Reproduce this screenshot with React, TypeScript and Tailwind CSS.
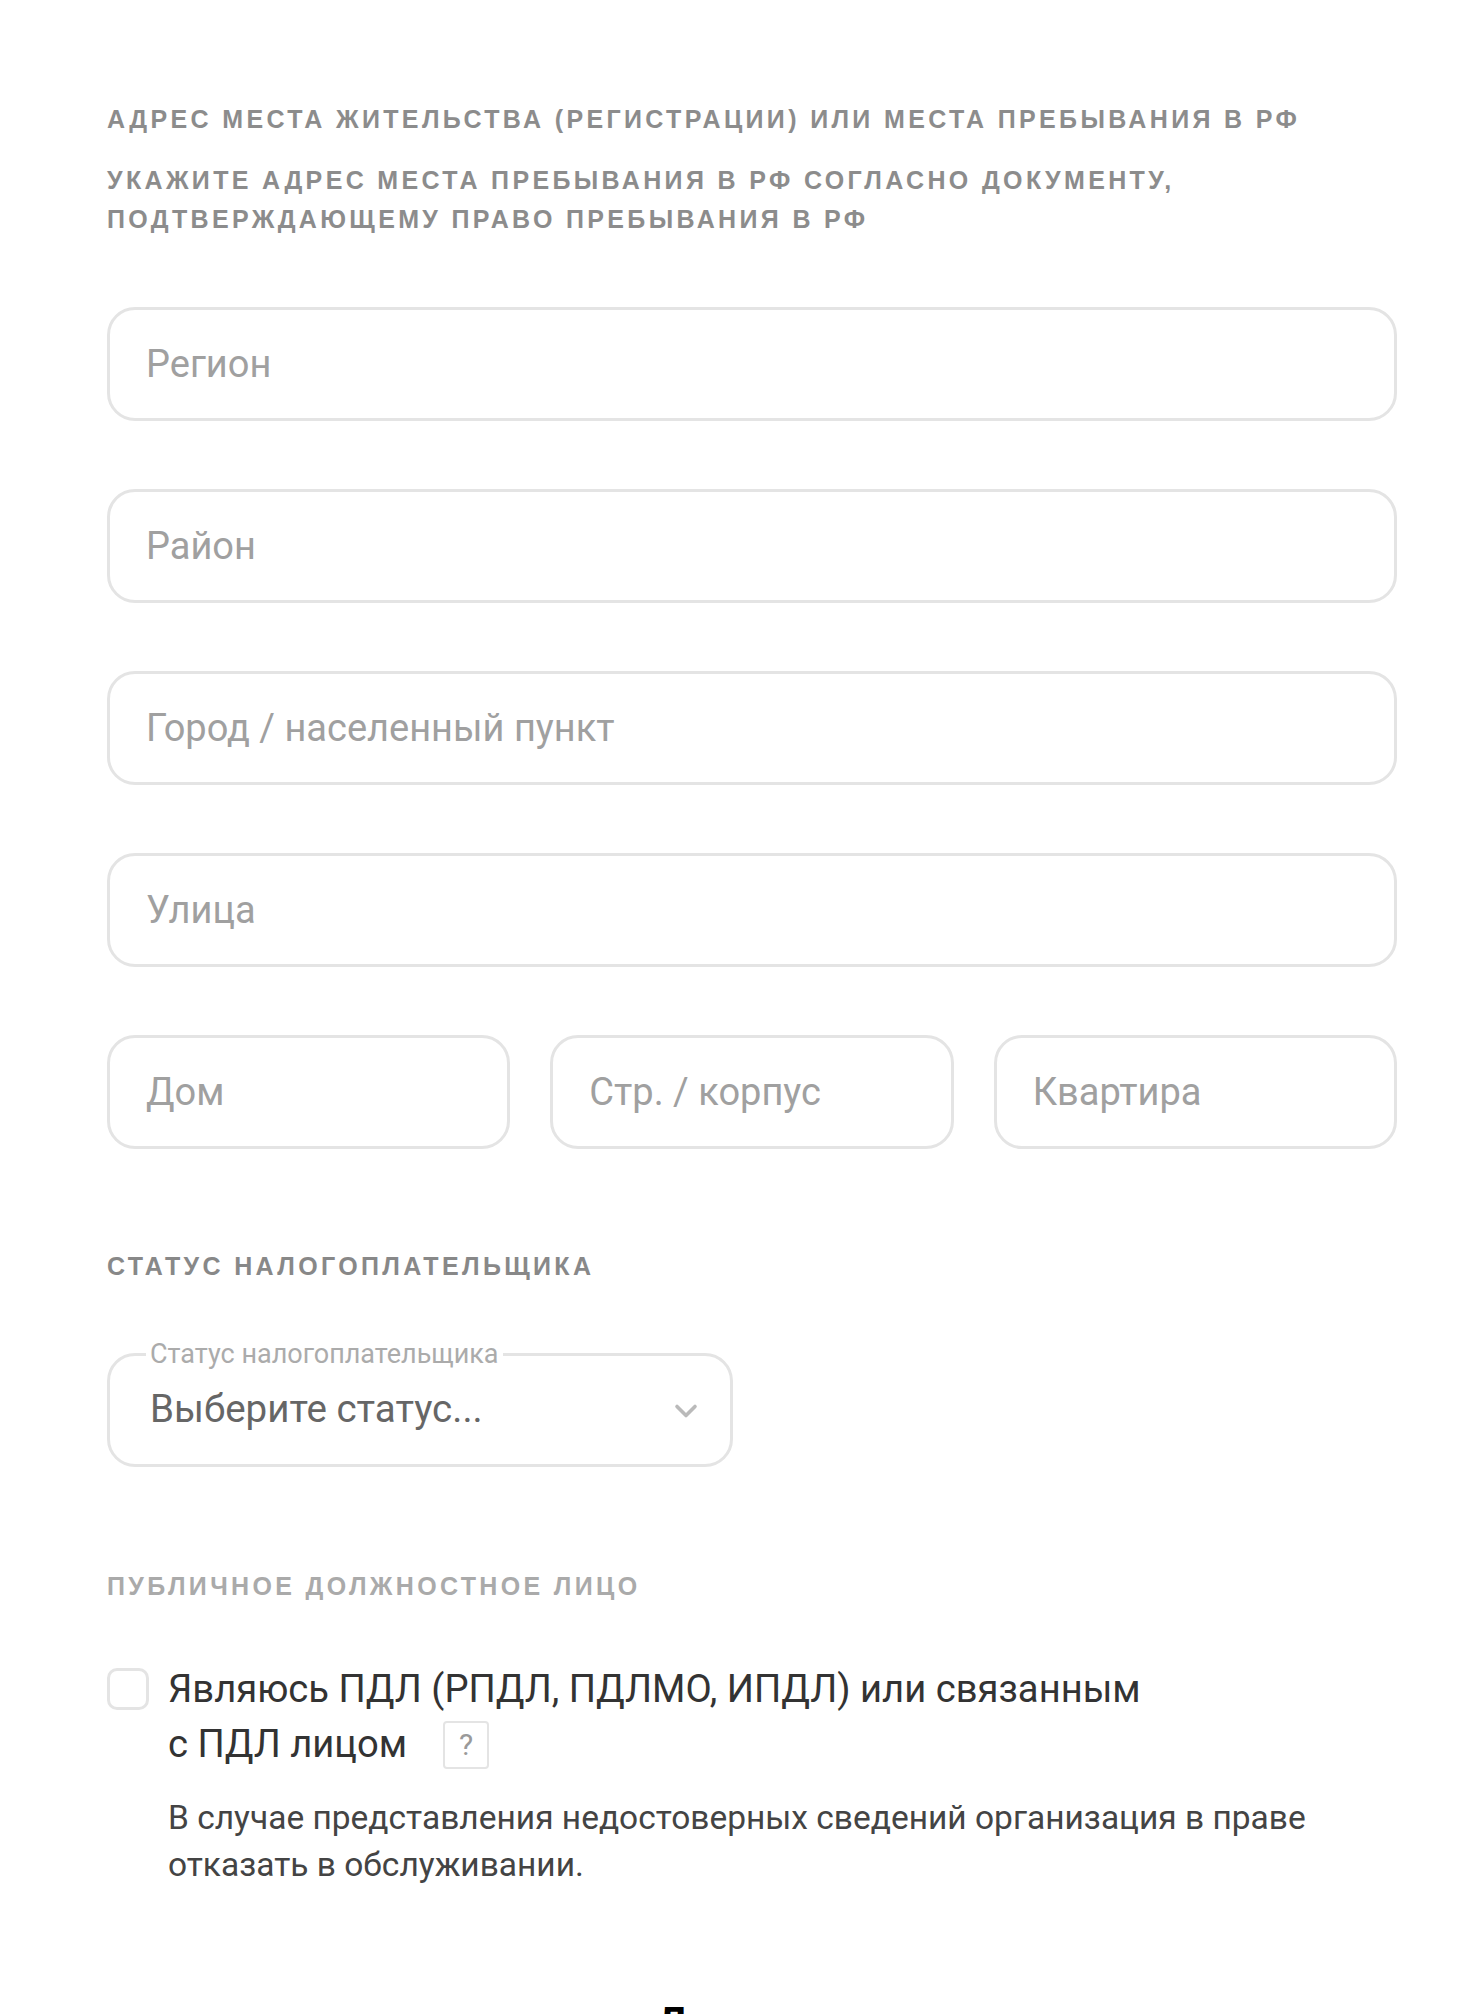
import { ChevronDown } from "lucide-react";

const headingClass =
  "font-['Liberation_Sans',Arial,sans-serif] font-bold uppercase text-[25px] leading-[28px] tracking-[3.35px]";

function TextField({ placeholder, className = "" }: { placeholder: string; className?: string }) {
  return (
    <div
      className={
        "h-[114px] flex items-center rounded-[28px] border-[3px] border-[#e4e4e4] bg-white px-[36px] " + className
      }
    >
      <span className="text-[38px] leading-[44px] text-[#a0a0a0]">{placeholder}</span>
    </div>
  );
}

export default function App() {
  return (
    <div className="min-h-screen bg-white font-['Roboto','Liberation_Sans',sans-serif]">
      <div className="pl-[107px] pr-[63px] pt-[105px]">
        <h2 className={headingClass + " text-[#8c8c8c]"}>
          Адрес места жительства (регистрации) или места пребывания в РФ
        </h2>
        <p className={headingClass + " mt-[28px] leading-[39px] text-[#8c8c8c]"}>
          Укажите адрес места пребывания в РФ согласно документу,
          <br />
          подтверждающему право пребывания в РФ
        </p>

        <div className="mt-[68px] flex flex-col gap-[68px]">
          <TextField placeholder="Регион" />
          <TextField placeholder="Район" />
          <TextField placeholder="Город / населенный пункт" />
          <TextField placeholder="Улица" />
          <div className="grid grid-cols-3 gap-[40px]">
            <TextField placeholder="Дом" />
            <TextField placeholder="Стр. / корпус" />
            <TextField placeholder="Квартира" />
          </div>
        </div>

        <h3 className={headingClass + " mt-[103px] text-[#888888]"}>Статус налогоплательщика</h3>

        <fieldset className="mt-[58px] w-[626px] rounded-[28px] border-[3px] border-[#e4e4e4]">
          <legend className="ml-[36px] px-[4px] text-[27px] leading-[32px] text-[#ababab]">
            Статус налогоплательщика
          </legend>
          <div className="flex h-[94px] items-start justify-between pl-[40px] pr-[26px] pt-[17px]">
            <span className="text-[38.5px] leading-[44px] text-[#666666]">Выберите статус...</span>
            <ChevronDown className="mt-[6px] h-[36px] w-[36px] text-[#bababa]" strokeWidth={2.4} />
          </div>
        </fieldset>

        <h3 className={headingClass + " mt-[105px] text-[#aaaaaa]"}>Публичное должностное лицо</h3>

        <div className="mt-[62px] flex gap-[19px]">
          <div className="mt-[6px] h-[42px] w-[42px] shrink-0 rounded-[10px] border-[3px] border-[#e4e4e4]" />
          <div>
            <p className="text-[38.2px] leading-[55px] text-[#333333]">
              Являюсь ПДЛ (РПДЛ, ПДЛМО, ИПДЛ) или связанным
              <br />
              <span className="inline-flex items-center">
                с ПДЛ лицом
                <span className="ml-[36px] inline-flex h-[48px] w-[46px] items-center justify-center rounded-[4px] border-[2px] border-[#e4e4e4] text-[30px] leading-none text-[#9a9a9a]">
                  ?
                </span>
              </span>
            </p>
            <p className="mt-[22px] text-[33.5px] leading-[47px] text-[#444444]">
              В случае представления недостоверных сведений организация в праве
              <br />
              отказать в обслуживании.
            </p>
          </div>
        </div>

        <div className="mt-[111px] pr-[72px] text-center text-[40px] font-bold leading-[48px] text-black">
          Далее
        </div>
      </div>
    </div>
  );
}
